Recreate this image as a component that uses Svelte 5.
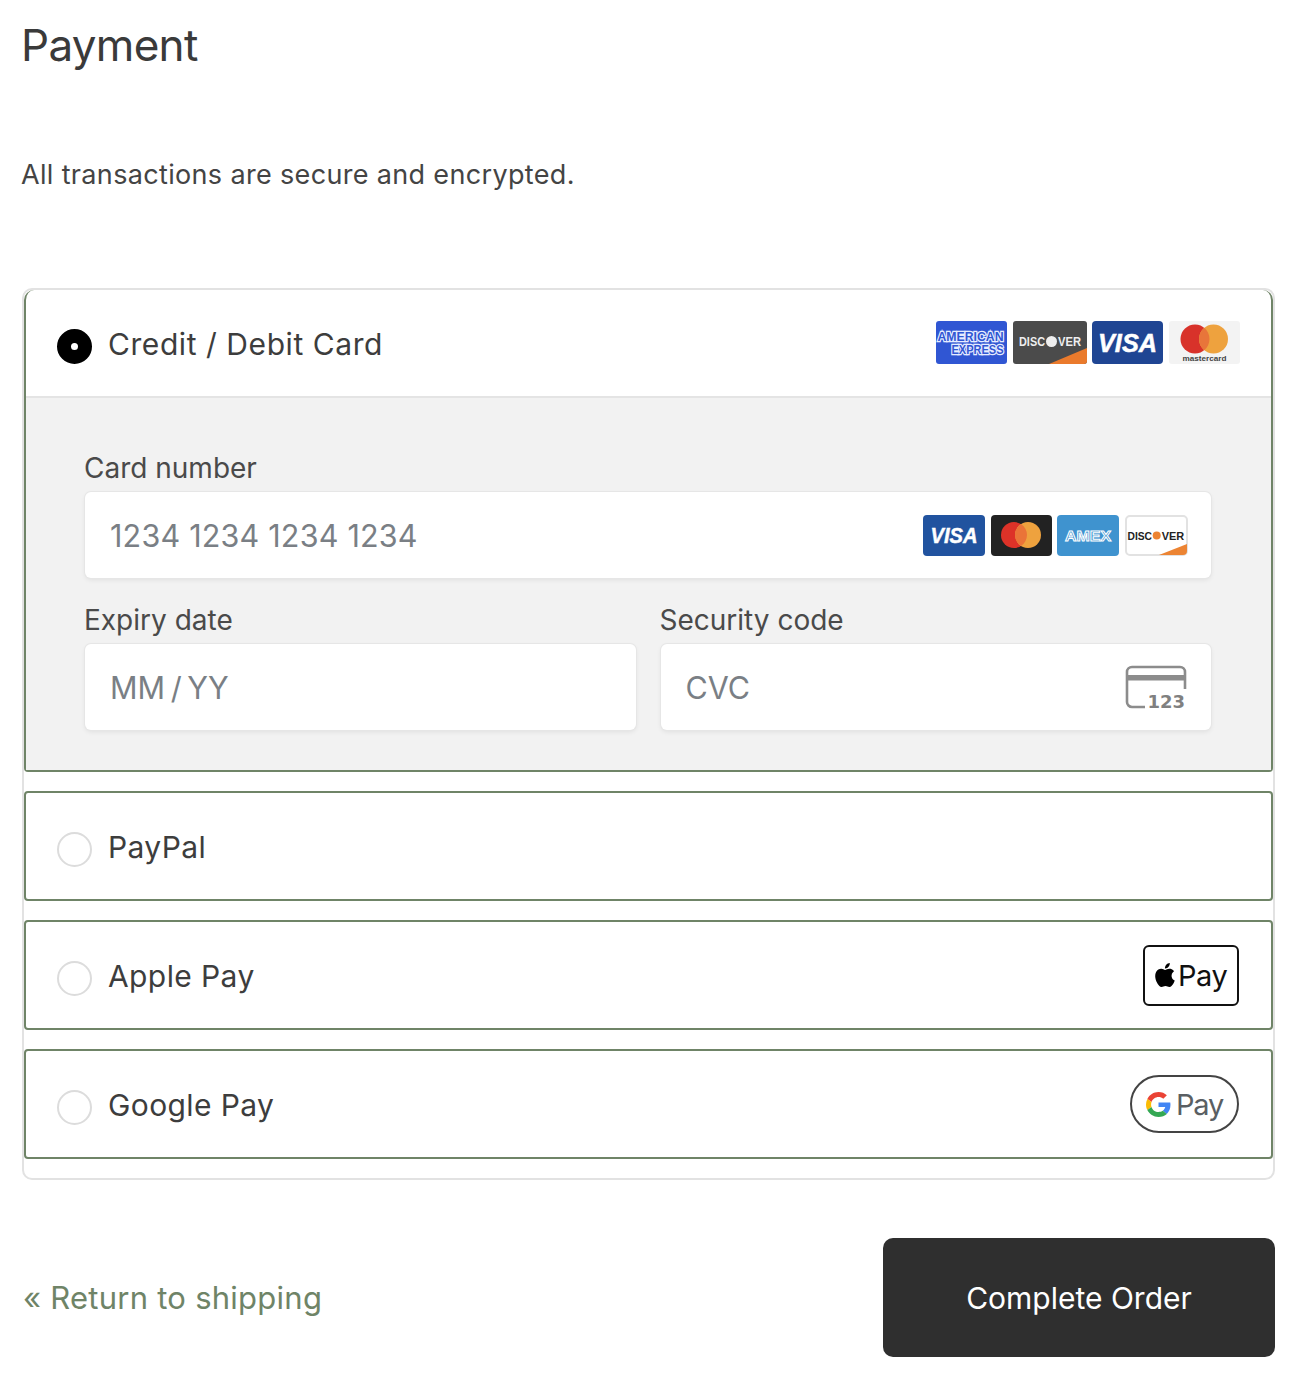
<script lang="ts">
  let method = $state("card");

  const options = [
    { id: "paypal", label: "PayPal" },
    { id: "apple", label: "Apple Pay" },
    { id: "google", label: "Google Pay" },
  ];
</script>

{#snippet visaMark(w: number, h: number, size: number, length: number, fill: string)}
  <svg class="logo" width={w} height={h} viewBox="0 0 {w} {h}">
    <rect width={w} height={h} rx="4" {fill} />
    <text x={w / 2} y={h / 2 + size * 0.36} text-anchor="middle" font-size={size} textLength={length} lengthAdjust="spacingAndGlyphs" class="mark-italic" fill="#fff">VISA</text>
  </svg>
{/snippet}

<main class="page">
  <h1>Payment</h1>
  <p class="note">All transactions are secure and encrypted.</p>

  <div class="methods">
    <section class="method first">
      <div class="method-head">
        <span class="radio on"></span>
        <span class="method-name">Credit / Debit Card</span>
        <div class="logos">
          <svg class="logo" width="71" height="43" viewBox="0 0 71 43">
            <rect width="71" height="43" rx="3" fill="#3056d3" />
            <text x="34.5" y="19.5" text-anchor="middle" class="mark-halo" font-size="12.5" textLength="66" lengthAdjust="spacingAndGlyphs">AMERICAN</text>
            <text x="41.5" y="33" text-anchor="middle" class="mark-halo" font-size="12.5" textLength="52" lengthAdjust="spacingAndGlyphs">EXPRESS</text>
          </svg>
          <svg class="logo" width="74" height="43" viewBox="0 0 74 43">
            <rect width="74" height="43" rx="3" fill="#4b4b4b" />
            <path d="M36 43 L74 27 V40 a3 3 0 0 1 -3 3 Z" fill="#ea7a2c" />
            <text x="6" y="25" class="mark" font-size="13.5" textLength="26" lengthAdjust="spacingAndGlyphs" fill="#eee">DISC</text>
            <circle cx="38.5" cy="20.5" r="5.5" fill="#eee" />
            <text x="45" y="25" class="mark" font-size="13.5" textLength="23" lengthAdjust="spacingAndGlyphs" fill="#eee">VER</text>
          </svg>
          {@render visaMark(71, 43, 25, 59, "#1f4593")}
          <svg class="logo" width="71" height="43" viewBox="0 0 71 43">
            <rect width="71" height="43" rx="3" fill="#f3f3f3" />
            <circle cx="26" cy="18" r="14.5" fill="#d8322a" />
            <circle cx="44.5" cy="18" r="14.5" fill="#eea23e" />
            <path d="M35.25 6.85 a14.5 14.5 0 0 1 0 22.3 a14.5 14.5 0 0 1 0 -22.3 Z" fill="#e8753a" />
            <text x="35.5" y="39.5" text-anchor="middle" class="mark" font-size="8" textLength="44" lengthAdjust="spacingAndGlyphs" fill="#444">mastercard</text>
          </svg>
        </div>
      </div>

      <div class="card-form">
        <label class="field">
          <span class="field-label">Card number</span>
          <span class="input">
            <span class="placeholder">1234 1234 1234 1234</span>
            <span class="input-logos">
              {@render visaMark(62, 41, 22, 47, "#21539f")}
              <svg class="logo" width="61" height="41" viewBox="0 0 61 41">
                <rect width="61" height="41" rx="4" fill="#222" />
                <circle cx="23" cy="20" r="13" fill="#dd3228" />
                <circle cx="37" cy="20" r="13" fill="#eea23e" />
                <path d="M30 9.05 a13 13 0 0 1 0 21.9 a13 13 0 0 1 0 -21.9 Z" fill="#ea7438" />
              </svg>
              <svg class="logo" width="62" height="41" viewBox="0 0 62 41">
                <rect width="62" height="41" rx="4" fill="#3f93cf" />
                <text x="31" y="26" text-anchor="middle" class="mark-outline" font-size="15" textLength="46" lengthAdjust="spacingAndGlyphs">AMEX</text>
              </svg>
              <svg class="logo" width="63" height="41" viewBox="0 0 63 41">
                <rect x="1" y="1" width="61" height="39" rx="4" fill="#fff" stroke="#e2e2e2" stroke-width="2" />
                <path d="M34 40 L62 29 V36 a4 4 0 0 1 -4 4 Z" fill="#ec8433" />
                <text x="2.5" y="24.5" class="mark" font-size="11.5" textLength="24.5" lengthAdjust="spacingAndGlyphs" fill="#222">DISC</text>
                <circle cx="31.7" cy="20.5" r="4" fill="#ec8433" />
                <text x="36.7" y="24.5" class="mark" font-size="11.5" textLength="22.5" lengthAdjust="spacingAndGlyphs" fill="#222">VER</text>
              </svg>
            </span>
          </span>
        </label>

        <div class="field-row">
          <label class="field">
            <span class="field-label">Expiry date</span>
            <span class="input"><span class="placeholder tight">MM / YY</span></span>
          </label>
          <label class="field">
            <span class="field-label">Security code</span>
            <span class="input">
              <span class="placeholder tight">CVC</span>
              <svg class="cvc" width="62" height="46" viewBox="0 0 62 46">
                <path d="M20 43 H7 a5 5 0 0 1 -5 -5 V8 a5 5 0 0 1 5 -5 H55 a5 5 0 0 1 5 5 V25" fill="none" stroke="#8c8c8c" stroke-width="2.6" />
                <rect x="2" y="11" width="58" height="5.5" fill="#8c8c8c" />
                <text x="60" y="43.5" text-anchor="end" class="cvc-text" font-size="18" fill="#808080">123</text>
              </svg>
            </span>
          </label>
        </div>
      </div>
    </section>

    {#each options as option}
      <section class="method">
        <div class="method-head">
          <span class="radio"></span>
          <span class="method-name">{option.label}</span>
          {#if option.id === "apple"}
            <div class="pay-badge apple">
              <svg width="24" height="26" viewBox="0 0 24 24"><path fill="#000" d="M12.152 6.896c-.948 0-2.415-1.078-3.96-1.04-2.04.027-3.91 1.183-4.961 3.014-2.117 3.675-.546 9.103 1.519 12.09 1.013 1.454 2.208 3.09 3.792 3.039 1.52-.065 2.09-.987 3.935-.987 1.831 0 2.35.987 3.96.948 1.637-.026 2.676-1.48 3.676-2.948 1.156-1.688 1.636-3.325 1.662-3.415-.039-.013-3.182-1.221-3.22-4.857-.026-3.04 2.48-4.494 2.597-4.559-1.429-2.09-3.623-2.324-4.39-2.376-2-.156-3.675 1.09-4.61 1.09zM15.53 3.83c.843-1.012 1.4-2.427 1.245-3.83-1.207.052-2.662.805-3.532 1.818-.78.896-1.454 2.338-1.273 3.714 1.338.104 2.715-.688 3.559-1.701"/></svg>
              <span>Pay</span>
            </div>
          {:else if option.id === "google"}
            <div class="pay-badge google">
              <svg width="25" height="25" viewBox="0 0 48 48">
                <path fill="#EA4335" d="M24 9.5c3.54 0 6.71 1.22 9.21 3.6l6.85-6.85C35.9 2.38 30.47 0 24 0 14.62 0 6.51 5.38 2.56 13.22l7.98 6.19C12.43 13.72 17.74 9.5 24 9.5z"/>
                <path fill="#4285F4" d="M46.98 24.55c0-1.57-.15-3.09-.38-4.55H24v9.02h12.94c-.58 2.96-2.26 5.48-4.78 7.18l7.73 6c4.51-4.18 7.09-10.36 7.09-17.65z"/>
                <path fill="#FBBC05" d="M10.53 28.59c-.48-1.45-.76-2.99-.76-4.59s.27-3.14.76-4.59l-7.98-6.19C.92 16.46 0 20.12 0 24c0 3.88.92 7.54 2.56 10.78l7.97-6.19z"/>
                <path fill="#34A853" d="M24 48c6.48 0 11.93-2.13 16.03-5.81l-7.73-6c-2.15 1.45-4.92 2.3-8.3 2.3-6.26 0-11.57-4.22-13.47-9.91l-7.98 6.19C6.51 42.62 14.62 48 24 48z"/>
              </svg>
              <span>Pay</span>
            </div>
          {/if}
        </div>
      </section>
    {/each}
  </div>

  <div class="actions">
    <a class="back" href="#shipping">« Return to shipping</a>
    <button class="submit" type="button">Complete Order</button>
  </div>
</main>

<style>
  :global(body) {
    margin: 0;
    background: #fff;
  }
  .page {
    width: 1300px;
    height: 1400px;
    box-sizing: border-box;
    padding: 16px 25px 0 22px;
    font-family: Inter, "Liberation Sans", sans-serif;
    color: #3a3a3a;
  }
  h1 {
    margin: 0 0 0 -1px;
    font-size: 44px;
    line-height: 58px;
    font-weight: 400;
    letter-spacing: -0.7px;
  }
  .note {
    margin: 86px 0 0 -1px;
    font-size: 27px;
    line-height: 30px;
    letter-spacing: 0.34px;
    color: #444;
  }
  .methods {
    margin-top: 98px;
    height: 892px;
    box-sizing: border-box;
    border: 2px solid #e2e2e2;
    border-radius: 10px;
    display: flex;
    flex-direction: column;
    gap: 19px;
  }
  .method {
    border: 2px solid #6f8467;
    border-radius: 4px;
    height: 110px;
    box-sizing: border-box;
  }
  .method.first {
    height: 482px;
    border-top: 0;
    border-radius: 10px 10px 4px 4px;
    flex-shrink: 0;
  }
  .method-head {
    display: flex;
    align-items: center;
    height: 106px;
    box-sizing: border-box;
    padding: 2px 31px 0;
  }
  .radio {
    width: 35px;
    height: 35px;
    box-sizing: border-box;
    border: 2px solid #dcdcdc;
    border-radius: 50%;
    margin-top: 4px;
    flex-shrink: 0;
  }
  .radio.on {
    border: 14px solid #000;
    background: #fff;
  }
  .method-name {
    margin: -1px 0 0 16px;
    font-size: 30px;
    line-height: 36px;
    letter-spacing: 0.4px;
    color: #3d3d3d;
  }
  .first .method-name {
    letter-spacing: 0.56px;
  }
  .logos {
    margin-left: auto;
    display: flex;
    gap: 5.67px;
    margin-top: -4px;
  }
  .logo {
    display: block;
    flex-shrink: 0;
  }
  .mark {
    font-family: "Liberation Sans", sans-serif;
    font-weight: 700;
  }
  .mark-italic {
    font-family: "Liberation Sans", sans-serif;
    font-weight: 700;
    font-style: italic;
    stroke: #fff;
    stroke-width: 0.5;
  }
  .mark-halo {
    font-family: "Liberation Sans", sans-serif;
    font-weight: 700;
    fill: #3056d3;
    stroke: #e6ecff;
    stroke-width: 2.4;
    paint-order: stroke;
  }
  .mark-outline {
    font-family: "Liberation Sans", sans-serif;
    font-weight: 700;
    fill: #3f93cf;
    stroke: #fff;
    stroke-width: 1;
  }
  .card-form {
    background: #f2f2f2;
    border-top: 2px solid #e4e4e4;
    height: 374px;
    box-sizing: border-box;
    padding: 52px 60px 0 59px;
  }
  .field {
    display: block;
    flex: 1;
    min-width: 0;
  }
  .field-label {
    display: block;
    margin: 0 0 6px -1px;
    font-size: 28px;
    line-height: 36px;
    color: #4a4a4a;
  }
  .input {
    display: flex;
    align-items: center;
    justify-content: space-between;
    height: 86px;
    box-sizing: border-box;
    padding: 0 23px 0 25px;
    background: #fff;
    border-radius: 6px;
    box-shadow: 0 0 0 1px #e6e6e6, 0 2px 5px rgba(0, 0, 0, 0.08);
  }
  .placeholder {
    font-size: 30.5px;
    letter-spacing: 0.2px;
    color: #7a7f85;
  }
  .placeholder.tight {
    letter-spacing: 0;
    word-spacing: -3px;
  }
  .input-logos {
    display: flex;
    gap: 5.67px;
  }
  .field-row {
    display: flex;
    gap: 25px;
    margin-top: 24px;
  }
  .cvc {
    margin: 0 1.5px 0 0;
    display: block;
    overflow: visible;
  }
  .cvc-text {
    font-family: "DejaVu Sans", sans-serif;
    font-weight: 700;
  }
  .pay-badge {
    margin-left: auto;
    margin-right: 1px;
    display: flex;
    align-items: center;
    box-sizing: border-box;
    margin-top: -2px;
  }
  .apple {
    width: 96px;
    height: 61px;
    border: 2px solid #111;
    border-radius: 6px;
    padding-left: 8px;
    gap: 1px;
    font-size: 29px;
    letter-spacing: -0.5px;
    color: #111;
  }
  .google {
    width: 109px;
    height: 58px;
    border: 2px solid #444;
    border-radius: 29px;
    padding-left: 14px;
    gap: 5px;
    font-size: 29px;
    letter-spacing: -1.2px;
    color: #5a5f63;
  }
  .actions {
    margin-top: 58px;
    display: flex;
    align-items: center;
    justify-content: space-between;
  }
  .back {
    margin-left: 1px;
    font-size: 31px;
    letter-spacing: 0.25px;
    color: #6f8467;
    text-decoration: none;
  }
  .submit {
    width: 392px;
    height: 119px;
    border: 0;
    border-radius: 10px;
    background: #2f2f2f;
    color: #fff;
    font: inherit;
    font-size: 30px;
  }
</style>
